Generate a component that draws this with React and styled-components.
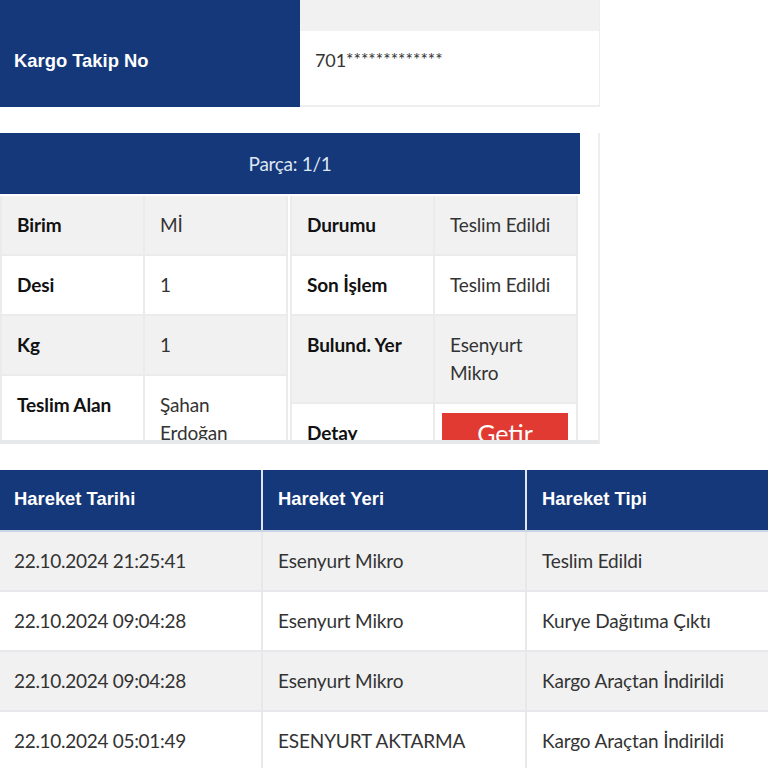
import React from "react";
import styled, { createGlobalStyle } from "styled-components";

const Global = createGlobalStyle`
  html, body { margin: 0; padding: 0; background: #fff; }
  body { font-family: Lato, "Open Sans", sans-serif; color: #222; overflow: hidden; }
  * { box-sizing: border-box; }
`;
const Page = styled.div`
  width: 768px;
  height: 768px;
  overflow: hidden;
  display: flex;
  flex-direction: column;
`;
const Tracking = styled.section`
  width: 600px;
  height: 107px;
  display: flex;
  flex: none;
`;
const TrackingLabel = styled.div`
  width: 300px;
  background: #14387a;
  color: #fff;
  font: 700 18.4px "Liberation Sans", Arial, sans-serif;
  padding-left: 14px;
  padding-top: 50px;
  line-height: 21px;
`;
const TrackingValues = styled.div`
  flex: 1;
  display: flex;
  flex-direction: column;
  border-right: 1px solid #eceef0;
  border-bottom: 2px solid #eceef0;
`;
const GrayStrip = styled.div`
  height: 31px;
  background: #f1f1f2;
`;
const TrackingNumber = styled.div`
  flex: 1;
  padding: 14px 15px;
  font-size: 18px;
  line-height: 30px;
  color: #333;
  letter-spacing: -0.1px;
`;
const Stars = styled.span`
  font-size: 17.5px;
  position: relative;
  top: -1px;
  letter-spacing: 0;
`;
const PartPanel = styled.section`
  width: 600px;
  height: 311px;
  margin-top: 26px;
  flex: none;
  overflow: hidden;
  border-right: 2px solid #eceef0;
  border-bottom: 4px solid #e6e8ea;
`;
const PartTitle = styled.div`
  width: 580px;
  height: 61px;
  background: #14387a;
  color: #dfe6f2;
  font-size: 19px;
  line-height: 61px;
  text-align: center;
  letter-spacing: -0.3px;
`;
const Columns = styled.div`
  width: 580px;
  display: flex;
  gap: 2px;
  padding-top: 2px;
`;
const PartTable = styled.div`
  width: 288px;
  display: grid;
  grid-template-columns: 143px minmax(0, 1fr);
  align-content: start;
  border-left: 2px solid #e9ebed;
  border-right: 2px solid #e9ebed;
`;
const Cell = styled.div`
  background: ${(p) => (p.$shade ? "#f1f1f2" : "#fff")};
  border-bottom: 2px solid #e9ebed;
  border-right: ${(p) => (p.$last ? "0" : "2px solid #e9ebed")};
  padding: 15px 15px 0;
  font-size: 19px;
  line-height: 28px;
  font-weight: ${(p) => (p.$head ? 700 : 400)};
  color: ${(p) => (p.$head ? "#111" : "#333")};
  letter-spacing: ${(p) => (p.$head ? "-0.1px" : "-0.15px")};
  height: ${(p) => p.$h || "60px"};
`;
const GetirButton = styled.button`
  display: block;
  width: 126px;
  height: 40px;
  margin: -6px 0 0 -8px;
  border: 0;
  background: #e03a33;
  color: #fff;
  font: 400 25px Lato, sans-serif;
  padding: 0;
`;
const History = styled.table`
  width: 768px;
  margin-top: 26px;
  border-collapse: collapse;
  table-layout: fixed;
  flex: none;
`;
const HeadCell = styled.th`
  height: 61px;
  background: #14387a;
  color: #fff;
  text-align: left;
  padding: 0 14px 2px;
  font: 700 18.4px "Liberation Sans", Arial, sans-serif;
  border-right: 2px solid #dfe5ee;
  border-bottom: 2px solid #c9d5e6;
  &:last-child { border-right: 0; }
  &:not(:first-child) { padding-left: 15px; }
`;
const BodyCell = styled.td`
  height: 60px;
  background: ${(p) => (p.$shade ? "#f1f1f2" : "#fff")};
  padding: 0 14px 2px;
  font-size: 19px;
  color: #333;
  letter-spacing: -0.15px;
  border-right: 2px solid #e6e8ec;
  border-bottom: 2px solid #e6e8ec;
  &:first-child { letter-spacing: -0.3px; }
  &:last-child { border-right: 0; }
  &:not(:first-child) { padding-left: 15px; }
`;

const rows = [
  ["22.10.2024 21:25:41", "Esenyurt Mikro", "Teslim Edildi"],
  ["22.10.2024 09:04:28", "Esenyurt Mikro", "Kurye Dağıtıma Çıktı"],
  ["22.10.2024 09:04:28", "Esenyurt Mikro", "Kargo Araçtan İndirildi"],
  ["22.10.2024 05:01:49", "ESENYURT AKTARMA", "Kargo Araçtan İndirildi"],
];

export default function App() {
  return (
    <Page>
      <Global />
      <Tracking>
        <TrackingLabel>Kargo Takip No</TrackingLabel>
        <TrackingValues>
          <GrayStrip />
          <TrackingNumber>701<Stars>*************</Stars></TrackingNumber>
        </TrackingValues>
      </Tracking>
      <PartPanel>
        <PartTitle>Parça: 1/1</PartTitle>
        <Columns>
          <PartTable>
            <Cell $head $shade>Birim</Cell>
            <Cell $shade $last>Mİ</Cell>
            <Cell $head>Desi</Cell>
            <Cell $last>1</Cell>
            <Cell $head $shade>Kg</Cell>
            <Cell $shade $last>1</Cell>
            <Cell $head $h="88px">Teslim Alan</Cell>
            <Cell $last $h="88px">Şahan Erdoğan</Cell>
          </PartTable>
          <PartTable>
            <Cell $head $shade>Durumu</Cell>
            <Cell $shade $last>Teslim Edildi</Cell>
            <Cell $head>Son İşlem</Cell>
            <Cell $last>Teslim Edildi</Cell>
            <Cell $head $shade $h="88px">Bulund. Yer</Cell>
            <Cell $shade $last $h="88px">Esenyurt Mikro</Cell>
            <Cell $head>Detay</Cell>
            <Cell $last><GetirButton>Getir</GetirButton></Cell>
          </PartTable>
        </Columns>
      </PartPanel>
      <History>
        <colgroup>
          <col style={{ width: 262 }} />
          <col style={{ width: 264 }} />
          <col />
        </colgroup>
        <thead>
          <tr>
            <HeadCell>Hareket Tarihi</HeadCell>
            <HeadCell>Hareket Yeri</HeadCell>
            <HeadCell>Hareket Tipi</HeadCell>
          </tr>
        </thead>
        <tbody>
          {rows.map((r, i) => (
            <tr key={i}>
              {r.map((c, j) => (
                <BodyCell key={j} $shade={i % 2 === 0}>{c}</BodyCell>
              ))}
            </tr>
          ))}
        </tbody>
      </History>
    </Page>
  );
}
